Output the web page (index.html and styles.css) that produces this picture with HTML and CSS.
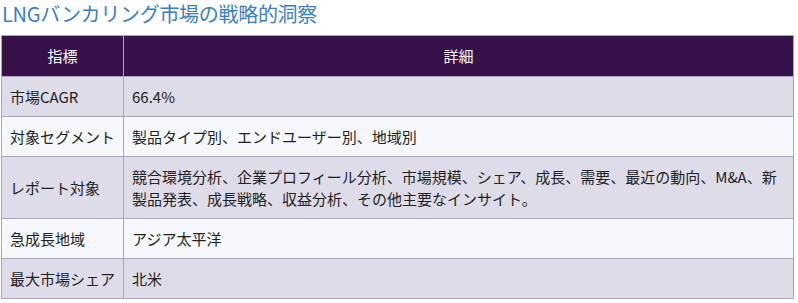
FILE: index.html
```html
<!DOCTYPE html>
<html lang="ja">
<head>
<meta charset="utf-8">
<link rel="stylesheet" href="styles.css">
</head>
<body>
<div class="wrap">
  <h2 class="title">LNGバンカリング市場の戦略的洞察</h2>
  <table class="insights">
    <thead>
      <tr><th class="c1">指標</th><th>詳細</th></tr>
    </thead>
    <tbody>
      <tr><td>市場CAGR</td><td>66.4%</td></tr>
      <tr><td>対象セグメント</td><td>製品タイプ別、エンドユーザー別、地域別</td></tr>
      <tr><td>レポート対象</td><td>競合環境分析、企業プロフィール分析、市場規模、シェア、成長、需要、最近の動向、M&amp;A、新製品発表、成長戦略、収益分析、その他主要なインサイト。</td></tr>
      <tr><td>急成長地域</td><td>アジア太平洋</td></tr>
      <tr><td>最大市場シェア</td><td>北米</td></tr>
    </tbody>
  </table>
</div>
</body>
</html>
```

FILE: styles.css
```css
html, body {
  margin: 0;
  padding: 0;
  background: #ffffff;
}
body {
  font-family: "Noto Sans CJK JP", "Noto Sans", sans-serif;
  color: #222222;
}
.wrap {
  padding: 0 4px 0 1px;
}
.title {
  margin: 0 0 8px 1px;
  font-size: 20px;
  font-weight: 400;
  line-height: 27px;
  color: #3a7fbf;
  letter-spacing: -0.3px;
}
.insights {
  width: 100%;
  border-collapse: collapse;
  font-size: 15px;
  border: 1px solid #aaa4c2;
}
.insights th, .insights td {
  border: 1px solid #aaa4c2;
  text-align: left;
  vertical-align: middle;
  line-height: 22px;
}
.insights th {
  background: #37124a;
  color: #ffffff;
  font-weight: 400;
  text-align: center;
  padding: 9px 8px 9px;
}
.insights .c1 {
  width: 105px;
}
.insights td {
  padding: 9px 8px 8px 8px;
}
.insights tbody tr:nth-child(odd) td {
  background: #dfdcea;
}
.insights tbody tr:nth-child(even) td {
  background: #f6f8fd;
}
.insights td:first-child {
  white-space: nowrap;
}
```
